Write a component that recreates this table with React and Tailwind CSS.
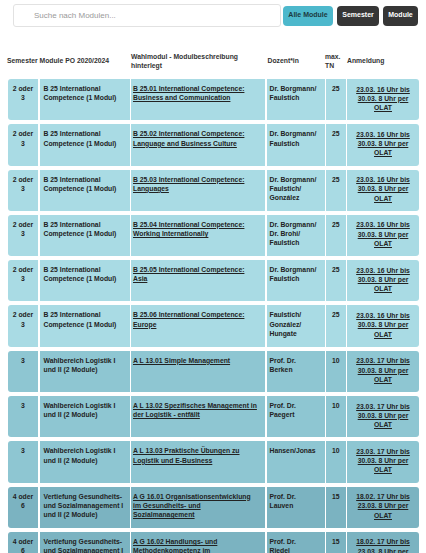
import React from "react";

const G1 = "bg-[#a9dbe4]";
const G2 = "bg-[#8ec6d2]";
const G3 = "bg-[#7bb3c1]";

const anm1 = ["23.03. 16 Uhr bis", "30.03. 8 Uhr per", "OLAT"];
const anm2 = ["23.03. 17 Uhr bis", "30.03. 8 Uhr per", "OLAT"];
const anm3 = ["18.02. 17 Uhr bis", "23.03. 8 Uhr per", "OLAT"];
const ic = ["B 25 International", "Competence (1 Modul)"];
const lg = ["Wahlbereich Logistik I", "und II (2 Module)"];
const gs = ["Vertiefung Gesundheits-", "und Sozialmanagement I", "und II (2 Module)"];

const rows = [
  { bg: G1, sem: ["2 oder", "3"], mod: ic, wm: ["B 25.01 International Competence:", "Business and Communication"], doz: ["Dr. Borgmann/", "Faulstich"], tn: "25", an: anm1 },
  { bg: G1, sem: ["2 oder", "3"], mod: ic, wm: ["B 25.02 International Competence:", "Language and Business Culture"], doz: ["Dr. Borgmann/", "Faulstich"], tn: "25", an: anm1 },
  { bg: G1, sem: ["2 oder", "3"], mod: ic, wm: ["B 25.03 International Competence:", "Languages"], doz: ["Dr. Borgmann/", "Faulstich/", "González"], tn: "25", an: anm1 },
  { bg: G1, sem: ["2 oder", "3"], mod: ic, wm: ["B 25.04 International Competence:", "Working Internationally"], doz: ["Dr. Borgmann/", "Dr. Brohi/", "Faulstich"], tn: "25", an: anm1 },
  { bg: G1, sem: ["2 oder", "3"], mod: ic, wm: ["B 25.05 International Competence:", "Asia"], doz: ["Dr. Borgmann/", "Faulstich"], tn: "25", an: anm1 },
  { bg: G1, sem: ["2 oder", "3"], mod: ic, wm: ["B 25.06 International Competence:", "Europe"], doz: ["Faulstich/", "González/", "Hungate"], tn: "25", an: anm1 },
  { bg: G2, sem: ["3"], mod: lg, wm: ["A L 13.01 Simple Management"], doz: ["Prof. Dr.", "Berken"], tn: "10", an: anm2 },
  { bg: G2, sem: ["3"], mod: lg, wm: ["A L 13.02 Spezifisches Management in", "der Logistik - entfällt"], doz: ["Prof. Dr.", "Paegert"], tn: "10", an: anm2 },
  { bg: G2, sem: ["3"], mod: lg, wm: ["A L 13.03 Praktische Übungen zu", "Logistik und E-Business"], doz: ["Hansen/Jonas"], tn: "10", an: anm2 },
  { bg: G3, sem: ["4 oder", "6"], mod: gs, wm: ["A G 16.01 Organisationsentwicklung", "im Gesundheits- und", "Sozialmanagement"], doz: ["Prof. Dr.", "Lauven"], tn: "15", an: anm3 },
  { bg: G3, sem: ["4 oder", "6"], mod: gs, wm: ["A G 16.02 Handlungs- und", "Methodenkompetenz im", "Sozialmanagement"], doz: ["Prof. Dr.", "Riedel"], tn: "15", an: anm3 },
];

function Lines({ lines, className = "" }) {
  return lines.map((l, i) => (
    <div key={i} className={"whitespace-nowrap " + className}>
      {l}
    </div>
  ));
}

export default function App() {
  return (
    <div
      className="w-[426px] h-[553px] overflow-hidden bg-white text-[#222]"
      style={{ fontFamily: '"Liberation Sans", Arial, sans-serif' }}
    >
      <div className="flex items-center pt-[4px] pl-[13px] pr-[8px]">
        <div className="w-[268px] h-[23px] border border-[#e2e2e2] rounded-[3px] bg-white flex items-center pl-[20px] text-[8px] text-[#9a9a9a]">
          Suche nach Modulen...
        </div>
        <div className="ml-[2px] h-[20px] w-[50px] rounded-[4px] bg-[#4db8cc] flex items-center justify-center text-[7px] font-bold text-[#1c3a40]">
          Alle Module
        </div>
        <div className="ml-[4px] h-[20px] w-[42px] rounded-[4px] bg-[#363636] flex items-center justify-center text-[7px] font-bold text-white">
          Semester
        </div>
        <div className="ml-[4px] h-[20px] w-[35px] rounded-[4px] bg-[#363636] flex items-center justify-center text-[7px] font-bold text-white">
          Module
        </div>
      </div>

      <div className="mt-[20px] pl-[8px] flex flex-col gap-[4px] text-[6.8px] font-bold leading-[9.3px]">
        <div className="flex gap-[1.5px] h-[28px] items-center text-[#333]">
          <div className="w-[30px] -ml-[1px]">Semester</div>
          <div className="w-[90px] ml-[1px]">Module PO 2020/2024</div>
          <div className="w-[134px]">
            <div>Wahlmodul - Modulbeschreibung</div>
            <div>hinterlegt</div>
          </div>
          <div className="w-[58px] pl-[1px]">Dozent*in</div>
          <div className="w-[19.5px] -ml-[1px]">
            <div>max.</div>
            <div>TN</div>
          </div>
          <div className="w-[72px] pl-[1px]">Anmeldung</div>
        </div>

        {rows.map((r, i) => (
          <div key={i} className="flex gap-[1.5px] h-[41.3px] shrink-0">
            <div className={`w-[30px] ${r.bg} rounded-l-[3px] pt-[5px] text-center`}>
              <Lines lines={r.sem} />
            </div>
            <div className={`w-[90px] ${r.bg} pt-[5px] pl-[4px]`}>
              <Lines lines={r.mod} />
            </div>
            <div className={`w-[134px] ${r.bg} pt-[5px] pl-[2px]`}>
              <Lines lines={r.wm} className="underline decoration-[0.6px] underline-offset-[1px]" />
            </div>
            <div className={`w-[58px] ${r.bg} pt-[5px] pl-[3px]`}>
              <Lines lines={r.doz} />
            </div>
            <div className={`w-[19.5px] ${r.bg} pt-[5px] text-center`}>
              {r.tn}
            </div>
            <div className={`w-[72px] ${r.bg} rounded-r-[3px] pt-[5.5px] text-center`}>
              <Lines lines={r.an} className="underline decoration-[0.6px] underline-offset-[1px]" />
            </div>
          </div>
        ))}
      </div>
    </div>
  );
}
